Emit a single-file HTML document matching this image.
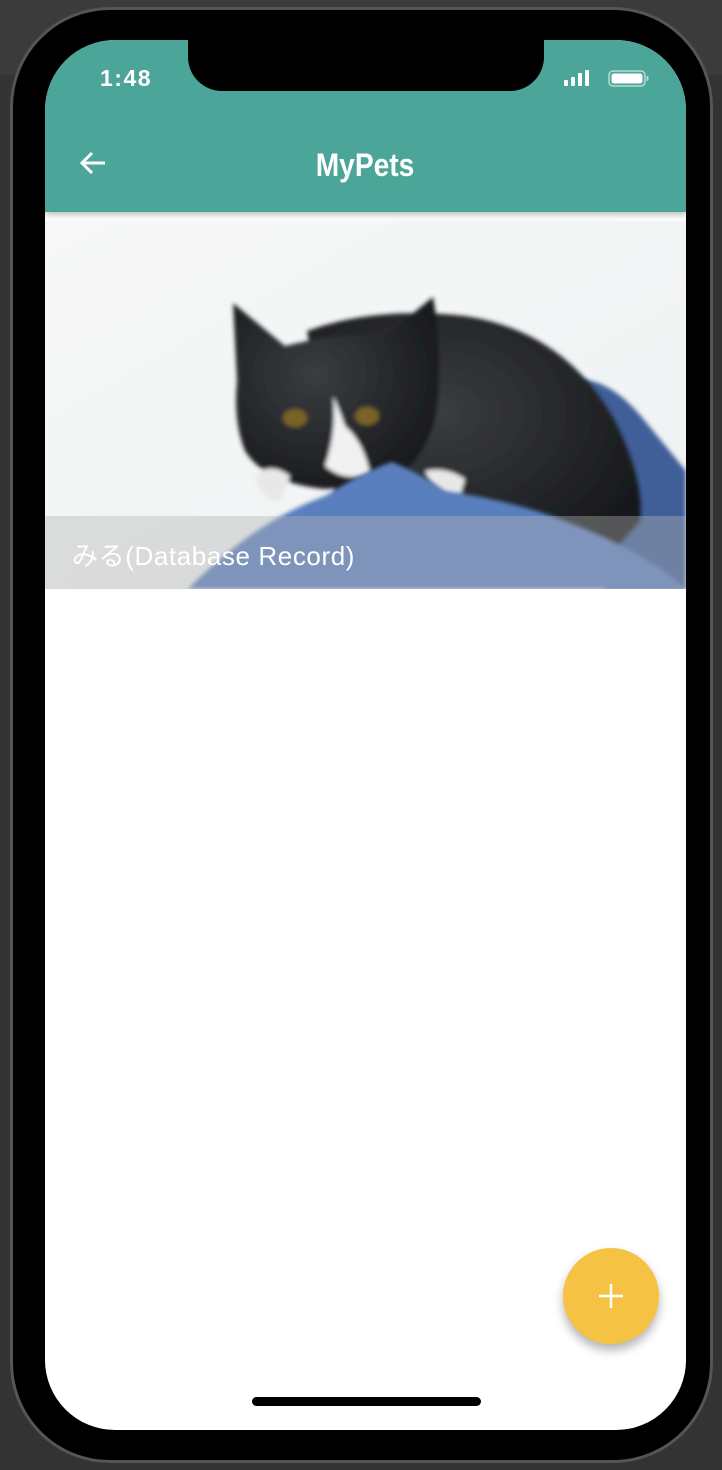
<!DOCTYPE html>
<html><head><meta charset="utf-8"><style>
*{margin:0;padding:0;box-sizing:border-box}
body{width:722px;height:1470px;background:#333;position:relative;overflow:hidden;font-family:"Liberation Sans","Noto Sans CJK JP",sans-serif}
.bgtop{position:absolute;left:0;top:0;width:722px;height:75px;background:#3b3b3b}
.phone{position:absolute;left:10px;top:7px;width:703px;height:1456px;border-radius:100px;background:#000;border:3px solid #555}
.screen{position:absolute;left:45px;top:40px;width:641px;height:1390px;border-radius:70px;background:#fff;overflow:hidden}
.appbar{position:absolute;left:0;top:0;width:641px;height:172px;background:#4ba598;box-shadow:0 3px 6px rgba(0,0,0,.25)}
.notch{position:absolute;left:143px;top:-2px;width:356px;height:53px;background:#000;border-radius:0 0 34px 34px}
.time{position:absolute;left:55px;top:25px;color:#fff;font-size:23px;font-weight:bold;letter-spacing:1.5px}
.title{position:absolute;left:0;width:641px;top:103px;text-align:center;color:#fff;font-family:"Liberation Sans Narrow","Liberation Sans",sans-serif;font-weight:bold;font-size:32px;line-height:44px}
.title span{display:inline-block;transform:scaleX(.88)}
.img{position:absolute;left:0;top:181px;width:641px;height:368px;overflow:hidden}
.band{position:absolute;left:0;top:295px;width:641px;height:73px;background:rgba(180,180,180,.4)}
.cap{position:absolute;left:27px;top:315px;color:#fff;font-size:26px;letter-spacing:.6px}
.fab{position:absolute;left:518px;top:1208px;width:96px;height:96px;border-radius:50%;background:#f5c244;box-shadow:0 6px 10px rgba(0,0,0,.3)}
.home{position:absolute;left:207px;top:1357px;width:229px;height:9px;border-radius:5px;background:#000}
</style></head><body>
<div class="bgtop"></div>
<div class="phone"></div>
<div class="screen">
 <div class="appbar">
  <div class="notch"></div>
  <div class="time">1:48</div>
  <svg style="position:absolute;left:518px;top:29px" width="90" height="20" viewBox="0 0 90 20">
   <rect x="1" y="11" width="4" height="6" rx="1" fill="#fff"/>
   <rect x="8" y="8" width="4" height="9" rx="1" fill="#fff"/>
   <rect x="15" y="4" width="4" height="13" rx="1" fill="#fff"/>
   <rect x="22" y="1" width="4" height="16" rx="1" fill="#fff"/>
   <rect x="46" y="2" width="36" height="15" rx="4" fill="none" stroke="rgba(255,255,255,.6)" stroke-width="1.5"/>
   <rect x="48.5" y="4.5" width="31" height="10" rx="2.5" fill="#fff"/>
   <rect x="83.5" y="7" width="2" height="5" rx="1" fill="rgba(255,255,255,.6)"/>
  </svg>
  <svg style="position:absolute;left:32px;top:108px" width="32" height="32" viewBox="0 0 32 32">
   <path d="M28 15H6M15 5L5 15l10 10" fill="none" stroke="#fff" stroke-width="3"/>
  </svg>
  <div class="title"><span>MyPets</span></div>
 </div>
 <div class="img">
  <svg width="641" height="368" viewBox="0 0 641 368">
   <defs>
    <linearGradient id="bg" x1="0" y1="0" x2="1" y2="1"><stop offset="0" stop-color="#f7f8f7"/><stop offset="1" stop-color="#eef2f3"/></linearGradient>
    <radialGradient id="cat" cx=".4" cy=".4" r=".7"><stop offset="0" stop-color="#3a3d40"/><stop offset="1" stop-color="#15171a"/></radialGradient>
    <filter id="bl"><feGaussianBlur stdDeviation="2"/></filter>
   </defs>
   <rect width="641" height="368" fill="url(#bg)"/>
   <path d="M520 160 Q560 150 600 200 L641 250 L641 368 L560 368Z" fill="#3f5f98" filter="url(#bl)"/>
   <g filter="url(#bl)">
   <path d="M262 110 Q330 85 420 95 Q520 110 570 200 Q600 260 595 300 L560 340 L300 330 Z" fill="url(#cat)"/>
   <path d="M188 82 L240 125 Q300 110 340 115 L388 76 Q398 130 392 190 Q380 250 330 265 L280 268 Q220 262 200 230 Q188 200 192 160 Z" fill="url(#cat)"/>
   <path d="M288 175 Q292 210 280 245 Q300 262 325 252 Q318 220 300 205 Q295 190 288 175Z" fill="#f1f1f1"/>
   <path d="M210 255 Q225 240 245 255 L235 280 Q215 280 210 255Z" fill="#e8e8e8"/>
   <path d="M380 250 Q400 245 420 258 L415 275 Q390 275 380 250Z" fill="#e8e8e8"/>
   <ellipse cx="250" cy="197" rx="12" ry="9" fill="#7a6426"/>
   <ellipse cx="322" cy="195" rx="12" ry="9" fill="#7a6426"/>
   </g>
   <path d="M143 368 Q210 300 280 275 Q320 250 347 241 Q380 255 400 270 Q470 280 520 300 Q600 330 641 368 Z" fill="#5a7fbf" filter="url(#bl)"/>
  </svg>
  <div class="band"></div>
  <div class="cap">みる(Database Record)</div>
 </div>
 <div class="fab">
  <svg width="96" height="96" viewBox="0 0 96 96"><path d="M48 36v24M36 48h24" stroke="#fff" stroke-width="2.5"/></svg>
 </div>
 <div class="home"></div>
</div>
</body></html>
